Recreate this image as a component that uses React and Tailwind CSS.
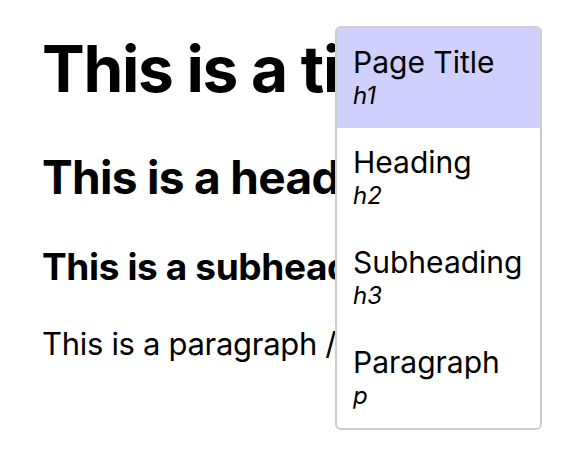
import React from 'react';

const items = [
  { label: 'Page Title', tag: 'h1', active: true },
  { label: 'Heading', tag: 'h2' },
  { label: 'Subheading', tag: 'h3' },
  { label: 'Paragraph', tag: 'p' },
];

export default function App() {
  return (
    <div className="relative w-[586px] h-[476px] bg-white text-black font-['Inter',sans-serif] overflow-hidden">
      <div className="pl-[42px] pt-[30px]">
        <h1 className="text-[64px] leading-[77px] font-bold tracking-[-0.02em] whitespace-nowrap">This is a title</h1>
        <h2 className="mt-[42px] text-[46px] leading-[56px] font-bold tracking-[-0.015em] whitespace-nowrap">This is a heading</h2>
        <h3 className="mt-[39px] text-[37px] leading-[45px] font-bold tracking-[-0.01em] whitespace-nowrap">This is a subheading</h3>
        <p className="mt-[36px] text-[31px] leading-[38px] tracking-[-0.01em] whitespace-nowrap">This is a paragraph / body text</p>
      </div>

      {/* block type menu */}
      <div className="absolute left-[335px] top-[26px] w-[207px] border-2 border-[#cccccc] rounded-md bg-white overflow-hidden">
        {items.map(item => (
          <div
            key={item.tag}
            className={`px-4 py-4 ${item.active ? 'bg-[#d0d0ff]' : ''}`}
          >
            <div className="text-[30px] leading-[36px]">{item.label}</div>
            <div className="text-[24px] leading-[32px] italic">{item.tag}</div>
          </div>
        ))}
      </div>
    </div>
  );
}
